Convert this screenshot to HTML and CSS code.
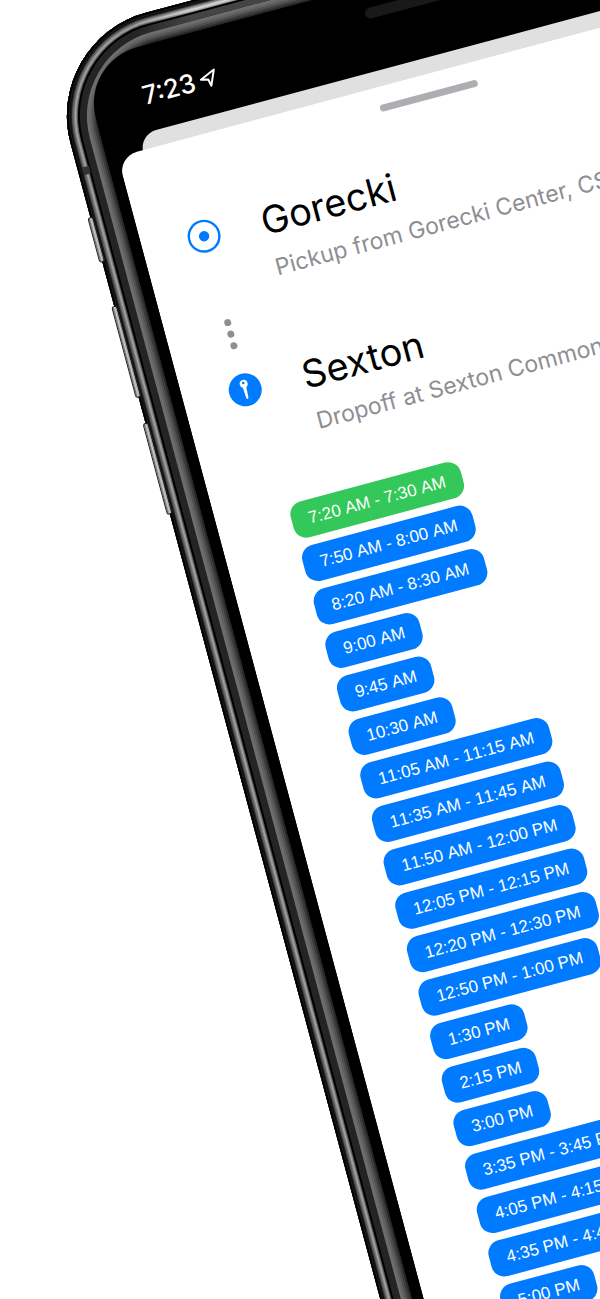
FILE: index.html
```html
<!DOCTYPE html>
<html lang="en">
<head>
<meta charset="utf-8">
<meta name="viewport" content="width=device-width, initial-scale=1">
<title>Gorecki to Sexton</title>
<link rel="stylesheet" href="styles.css">
</head>
<body>
<main class="stage">
  <div class="phone">
    <span class="side-key side-key--mute"></span>
    <span class="side-key side-key--up"></span>
    <span class="side-key side-key--down"></span>
    <div class="frame">
      <span class="shine"></span>
      <span class="antenna"></span>
      <span class="speaker"></span>
      <div class="glass">
      <div class="screen">
        <header class="status">
          <span class="time">7:23</span>
          <svg class="location" viewBox="0 0 18 18" aria-hidden="true"><path d="M1.5 8 L16.5 1.5 L10 16.5 L8.6 9.6 Z"/></svg>
        </header>
        <div class="back-sheet"></div>
        <section class="sheet">
          <div class="grabber"></div>
          <div class="stop">
            <svg class="stop-icon" viewBox="0 0 34 34" aria-hidden="true"><circle cx="17" cy="17" r="15.3" fill="none" stroke="#007aff" stroke-width="2.4"/><circle cx="17" cy="17" r="5.2" fill="#007aff"/></svg>
            <div class="stop-text">
              <h1 class="stop-name">Gorecki</h1>
              <p class="stop-note">Pickup from Gorecki Center, CSB</p>
            </div>
            <div class="dots"><i class="dot"></i><i class="dot"></i><i class="dot"></i></div>
          </div>
          <div class="stop">
            <svg class="stop-icon" viewBox="0 0 34 34" aria-hidden="true"><circle cx="17" cy="17" r="16.5" fill="#007aff"/><circle cx="17" cy="10.8" r="4" fill="#fff"/><circle cx="16.8" cy="9.9" r="1.3" fill="#007aff"/><path d="M15.2 13.5 H18.8 L18.1 25.4 Q17 27.4 15.9 25.4 Z" fill="#fff"/></svg>
            <div class="stop-text">
              <h1 class="stop-name">Sexton</h1>
              <p class="stop-note">Dropoff at Sexton Commons, SJU</p>
            </div>
          </div>
          <div class="times">
            <button class="slot slot--now">7:20 AM - 7:30 AM</button>
            <button class="slot">7:50 AM - 8:00 AM</button>
            <button class="slot">8:20 AM - 8:30 AM</button>
            <button class="slot">9:00 AM</button>
            <button class="slot">9:45 AM</button>
            <button class="slot">10:30 AM</button>
            <button class="slot">11:05 AM - 11:15 AM</button>
            <button class="slot">11:35 AM - 11:45 AM</button>
            <button class="slot">11:50 AM - 12:00 PM</button>
            <button class="slot">12:05 PM - 12:15 PM</button>
            <button class="slot">12:20 PM - 12:30 PM</button>
            <button class="slot">12:50 PM - 1:00 PM</button>
            <button class="slot">1:30 PM</button>
            <button class="slot">2:15 PM</button>
            <button class="slot">3:00 PM</button>
            <button class="slot">3:35 PM - 3:45 PM</button>
            <button class="slot">4:05 PM - 4:15 PM</button>
            <button class="slot">4:35 PM - 4:45 PM</button>
            <button class="slot">5:00 PM</button>
          </div>
        </section>
      </div>
      </div>
    </div>
  </div>
</main>
</body>
</html>
```
FILE: styles.css
```css
* { box-sizing: border-box; }
html, body { margin: 0; height: 100%; }
body { background: #fff; font-family: Inter, sans-serif; color: #000; }
.stage { position: relative; height: 100%; overflow: hidden; }

/* The handset lies tilted on the page canvas. */
.phone {
  position: absolute;
  left: 0;
  top: 0;
  width: 747px;
  padding: 50px 0 0 31px;
  transform: rotate(-15deg);
  transform-origin: 0 0;
}
.frame {
  position: relative;
  padding: 31px;
  border-radius: 107px;
  background: #000;
  box-shadow:
    inset 0 0 0 2px #000,
    inset 0 0 0 3px #1c1c1c,
    inset 0 0 0 4px #0c0c0c,
    inset 0 0 0 5px #222,
    inset 0 0 0 6px #555,
    inset 0 0 0 7px #666,
    inset 0 0 0 8px #858585,
    inset 0 0 0 9px #a8a5a5,
    inset 0 0 0 10px #8a8787,
    inset 0 0 0 11px #555,
    inset 0 0 0 13px #000,
    inset 0 0 0 20px #242424,
    inset 0 0 0 21px #707070,
    inset 0 0 0 23px #6c6c6c,
    inset 0 0 0 25px #606060,
    inset 0 0 0 27px #505050,
    inset 0 0 0 29px #3c3c3c,
    inset 0 0 0 31px #282828;
}
.glass { padding: 11px; border-radius: 58px; background: #000; }
/* Light caught by the top rail. */
.shine {
  position: absolute;
  left: 90px;
  right: 90px;
  top: 5px;
  height: 15px;
  background: linear-gradient(#444, #999 2px, #ddd 4px, #999 6px, #000 7px, #000 8px, #444 9px, #444);
  -webkit-mask-image: linear-gradient(90deg, transparent, #000 60px);
  mask-image: linear-gradient(90deg, transparent, #000 60px);
}
.antenna { position: absolute; left: 5px; top: 133px; width: 7px; height: 8px; background: #333; }
.speaker { position: absolute; left: 318px; top: 53px; width: 80px; height: 11px; border-radius: 6px; background: #191919; }
.side-key {
  position: absolute;
  z-index: 1;
  left: 28px;
  width: 6px;
  border: 1px solid #222;
  border-radius: 3px;
  background: linear-gradient(90deg, #555, #ccc 50%, #888);
}
.side-key--mute { top: 233px; height: 47px; }
.side-key--up { top: 325px; height: 95px; }
.side-key--down { top: 446px; height: 95px; }

.screen { border-radius: 47px; overflow: hidden; }
.status { display: flex; align-items: center; gap: 5px; height: 74px; padding: 2px 40px 0; }
.time { color: #fff; font-size: 26px; line-height: 32px; font-weight: 500; }
.location { width: 18px; height: 18px; fill: none; stroke: #fff; stroke-width: 2; stroke-linejoin: round; }
.back-sheet { height: 36px; margin: 0 26px -20px; border-radius: 18px 18px 0 0; background: #e0e0e0; }
.sheet { position: relative; padding: 18px 46px 400px; border-radius: 20px 20px 0 0; background: #fff; }
.grabber { width: 101px; height: 7px; margin: 0 auto 49px; border-radius: 4px; background: #aeaeb2; }
.stop { display: grid; grid-template-columns: 34px 1fr; column-gap: 42px; height: 159px; align-content: start; }
.stop-icon { width: 34px; height: 34px; margin-top: 8px; }
.stop-text { grid-row: span 2; }
.stop-name { margin: 0; font-size: 38px; line-height: 52px; font-weight: 400; }
.stop-note { margin: 7px 0 0 2px; font-size: 23px; line-height: 30px; color: #8e8e93; white-space: nowrap; }
.dots { display: grid; justify-content: center; gap: 5px; padding-top: 69px; }
.dot { width: 7px; height: 7px; border-radius: 50%; background: #8e8e93; }
.times { display: flex; flex-direction: column; align-items: flex-start; gap: 8px; margin-top: -12px; padding: 0 28px; }
.slot {
  height: 37px;
  padding: 0 17px;
  border: 0;
  border-radius: 13px;
  background: #007aff;
  color: #fff;
  font: 17px/37px "Liberation Sans", Arial, sans-serif;
  font-kerning: none;
  white-space: nowrap;
}
.slot--now { background: #34c759; }
```
